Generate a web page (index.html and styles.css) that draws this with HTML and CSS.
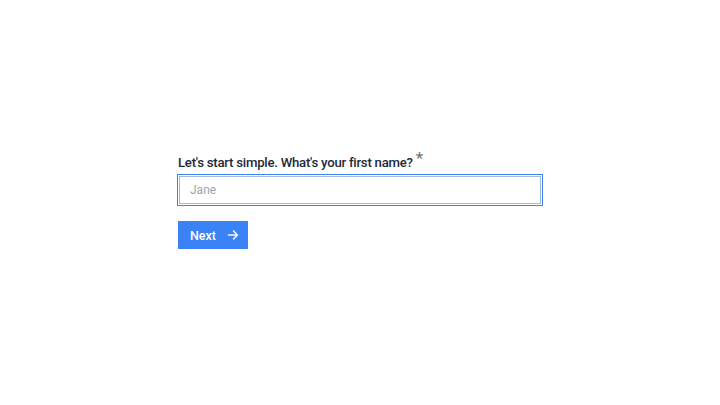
FILE: index.html
```html
<!DOCTYPE html>
<html>
<head>
<meta charset="utf-8">
<link rel="stylesheet" href="styles.css">
</head>
<body>
<main class="page">
  <form class="form">
    <label class="label" for="first">Let's start simple. What's your first name? <span class="req">*</span></label>
    <input class="input" id="first" type="text" placeholder="Jane">
    <button class="btn" type="button">Next
      <svg class="arrow" width="12" height="12" viewBox="0 0 12 12" fill="none" stroke="#fff" stroke-width="1.4" stroke-linecap="round" stroke-linejoin="round"><path d="M1.5 6h9M6.5 2l4 4-4 4"/></svg>
    </button>
  </form>
</main>
</body>
</html>
```
FILE: styles.css
```css
html, body {
  margin: 0;
  padding: 0;
  background: #ffffff;
}
body {
  font-family: Roboto, "Liberation Sans", sans-serif;
}
.page {
  width: 720px;
  height: 405px;
  display: flex;
  align-items: center;
  justify-content: center;
}
.form {
  width: 366px;
  display: flex;
  flex-direction: column;
  align-items: flex-start;
  margin-top: -2px;
}
.label {
  font-size: 13.2px;
  font-weight: 500;
  color: #1f2937;
  line-height: 18px;
  letter-spacing: -0.25px;
  margin-left: 1px;
  margin-bottom: 2px;
}
.req {
  color: #6b7280;
  font-size: 17px;
  font-weight: 400;
  vertical-align: 3px;
  line-height: 0;
  letter-spacing: 0;
}
.input {
  box-sizing: border-box;
  width: 362px;
  height: 28px;
  margin: 2px 0 0 2px;
  border: 1px solid #a9b9d4;
  outline: 1px solid #3b82f6;
  outline-offset: 1px;
  padding: 0 10px;
  font-family: inherit;
  font-size: 12px;
  color: #1f2937;
  background: #fff;
}
.input::placeholder {
  color: #9ca3af;
}
.btn {
  margin-top: 17px;
  margin-left: 1px;
  width: 70px;
  height: 28px;
  border: none;
  background: #3b82f6;
  color: #fff;
  font-family: inherit;
  font-size: 12.5px;
  font-weight: 500;
  display: flex;
  align-items: center;
  padding: 0 0 0 12px;
  gap: 11px;
}
.arrow {
  display: block;
}
```
